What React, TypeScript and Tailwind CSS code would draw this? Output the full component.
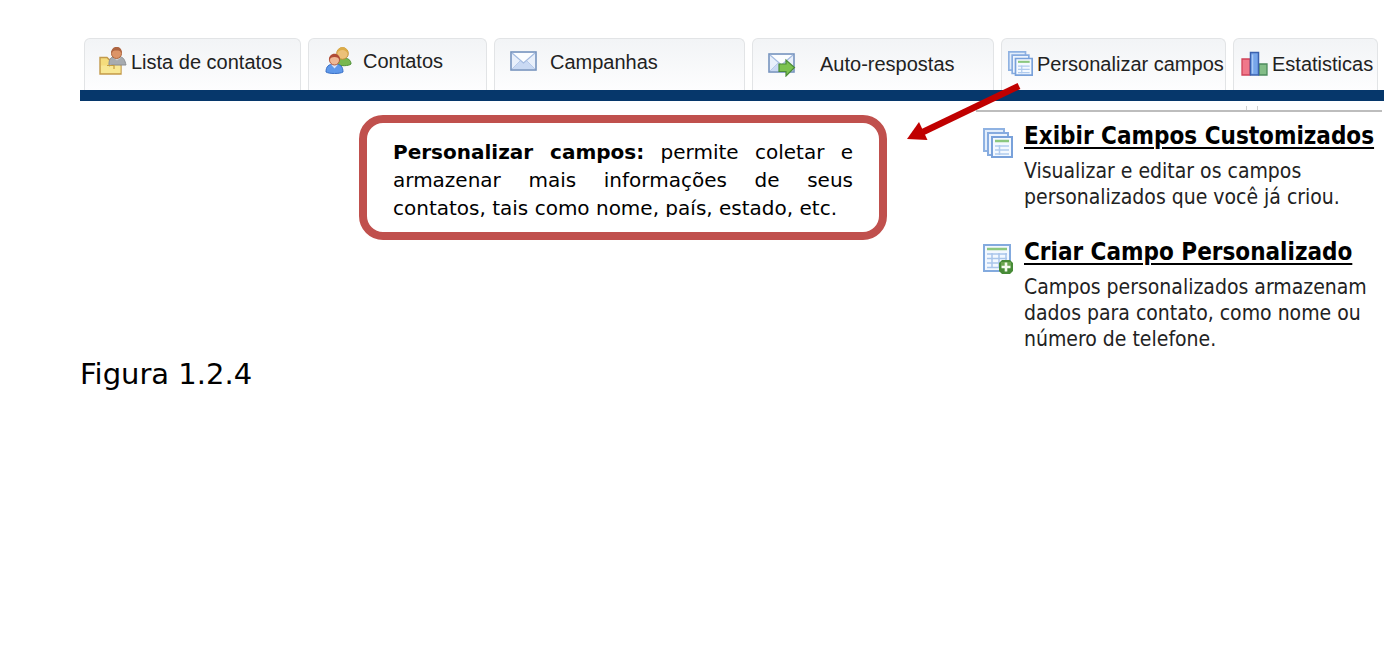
import React from "react";

function ListIcon() {
  return (
    <svg width="28" height="30" viewBox="0 0 28 30" className="shrink-0" aria-hidden="true">
      <path d="M1 10.500h7l2 2h12V27H1z" fill="#f5dc7c" stroke="#c39a4c" strokeWidth="1.400" />
      <path d="M2 18.500h19.500V26H2z" fill="#f8e794" />
      <path d="M10 17c0-5 2-7 5-7h6c4 0 5 4 6 8H13l-3 1z" fill="#a7abb0" stroke="#8a8d92" strokeWidth="1" />
      <path d="M14 10.500l4 3 4-3" fill="#d0d2d5" />
      <circle cx="17.500" cy="6.500" r="5" fill="#dc9468" stroke="#b0673e" strokeWidth="1" />
      <path d="M12 6.500c0-9 11.500-9 11 0-1-2.500-3-3-5.500-3s-4.500.5-5.500 3z" fill="#ad6440" />
      <path d="M8 18.500h7v3.500" fill="none" stroke="#c59c3f" strokeWidth="1.200" />
    </svg>
  );
}

function PeopleIcon() {
  return (
    <svg width="28" height="30" viewBox="0 0 28 30" className="shrink-0" aria-hidden="true">
      <path d="M11 18c0-4 2-6 7-6s8 2 8 6c-2 2-11 2.500-15 0z" fill="#78b850" stroke="#4f9038" strokeWidth="1" />
      <circle cx="17.500" cy="7.500" r="5.800" fill="#ecc078" stroke="#c38e35" strokeWidth="1" />
      <path d="M12 8c-1-9 12-9 11 0-2-3-3-4-5.500-4S13 5 12 8z" fill="#dcac48" />
      <path d="M1 26c0-5 2-8 8.500-8s8.500 3 8.500 8c-3 2-14 2-17 0z" fill="#5e98ea" stroke="#3a70c6" strokeWidth="1" />
      <path d="M6 18.500l3.500 4 3.500-4z" fill="#d5e5fb" />
      <circle cx="9.500" cy="14" r="5" fill="#eeb895" stroke="#b55b3e" strokeWidth="1" />
      <path d="M4 14.500c-1-9 12-9 11 0-1-3-3-3.500-5.500-3.500S5 11.500 4 14.500z" fill="#b04c36" />
    </svg>
  );
}

function MailIcon({ forward = false }: { forward?: boolean }) {
  return (
    <svg width="28" height="26" viewBox="0 0 28 26" className="shrink-0" aria-hidden="true">
      <rect x="1" y="3" width="25" height="18" fill="#e9f0fb" stroke="#7794bf" strokeWidth="1.600" />
      <path d="M2 20l8.500-8.500L13.500 14l3-2.500L25 20z" fill="#c9d9f3" />
      <path d="M2 4l11.500 10L25 4" fill="#fbfdff" stroke="#a4bbe0" strokeWidth="1.200" />
      <path d="M2 20l8-8M25 20l-8-8" fill="none" stroke="#b7cae9" strokeWidth="1" />
      {forward && (
        <path d="M11 13h7V9l8.500 7.500-8.500 8.500v-4.500h-7z" fill="#7cc250" stroke="#4b8b38" strokeWidth="1.200" />
      )}
    </svg>
  );
}

function StackIcon({ size = 30 }: { size?: number }) {
  return (
    <svg width={size} height={size} viewBox="0 0 30 30" className="shrink-0" aria-hidden="true">
      <path d="M1 1h20v22H1z" fill="#e3eefb" stroke="#8fb2e2" strokeWidth="2" />
      <path d="M5 5h20v22H5z" fill="#edf4fd" stroke="#86abdf" strokeWidth="2" />
      <path d="M9 9h20v20H9z" fill="#f4f9ff" stroke="#79a1da" strokeWidth="2" />
      <path d="M12 13h14" stroke="#8bc77f" strokeWidth="2.500" />
      <path d="M12 18h14M12 22h14M12 26h14M16.500 17v10" stroke="#b0cbee" strokeWidth="1.500" />
    </svg>
  );
}

function FormAddIcon() {
  return (
    <svg width="30" height="30" viewBox="0 0 30 30" className="shrink-0" aria-hidden="true">
      <path d="M1 1h26v26H1z" fill="#f3f8ff" stroke="#83aade" strokeWidth="2" />
      <path d="M4 5h20" stroke="#8cc77f" strokeWidth="2.500" />
      <path d="M4 10h20M4 14.500h20M4 19h20M4 23.500h20M9 9v15M16 9v15M23 9v12" stroke="#a9c5eb" strokeWidth="1.500" />
      <path d="M19 16h8l3 3v8l-3 3h-8l-3-3v-8z" fill="#478b37" />
      <path d="M18 18h10v4H18z" fill="#6aa54f" />
      <path d="M23 18.500v9M18.500 23h9" stroke="#f4faef" strokeWidth="2.600" />
    </svg>
  );
}

function ChartIcon() {
  return (
    <svg width="27" height="26" viewBox="0 0 27 26" className="shrink-0" aria-hidden="true">
      <path d="M1 8h8v16H1z" fill="#f0788a" stroke="#cf4258" strokeWidth="1.300" />
      <path d="M18 13h8v11h-8z" fill="#83bd87" stroke="#4d8b5d" strokeWidth="1.300" />
      <path d="M9.500 1.500h8V24h-8z" fill="#78a6ea" stroke="#3b61ae" strokeWidth="1.500" />
      <path d="M11.500 3.500v19" stroke="#a9caf7" strokeWidth="1.500" />
    </svg>
  );
}

const tabs = [
  { label: "Lista de contatos", icon: <ListIcon />, box: "pl-3.5 gap-1 pb-1.5" },
  { label: "Contatos", icon: <PeopleIcon />, box: "pl-4 gap-2.5 pb-2" },
  { label: "Campanhas", icon: <MailIcon />, box: "pl-[15px] gap-3 pb-1.5" },
  { label: "Auto-respostas", icon: <MailIcon forward />, box: "pl-[15px] gap-6 pb-0.5" },
  { label: "Personalizar campos", icon: <StackIcon size={25} />, box: "pl-1.5 gap-1 pb-0.5" },
  { label: "Estatisticas", icon: <ChartIcon />, box: "pl-[7px] gap-1 pb-0.5" },
];

const options = [
  {
    title: "Exibir Campos Customizados",
    text: "Visualizar e editar os campos personalizados que você já criou.",
    icon: <StackIcon />,
  },
  {
    title: "Criar Campo Personalizado",
    text: "Campos personalizados armazenam dados para contato, como nome ou número de telefone.",
    icon: <FormAddIcon />,
  },
];

export default function App() {
  return (
    <div className="min-h-screen bg-white pt-[38px] pr-4 pl-20 font-['DejaVu_Sans',sans-serif] text-black">
      <nav className="grid grid-cols-[217fr_179fr_251fr_242fr_225fr_145fr] gap-[7px] border-b-[11px] border-[#06376b] pr-1.5 pl-1 font-['Liberation_Sans',sans-serif]">
        {tabs.map((tab) => (
          <a
            key={tab.label}
            href="#"
            className={`flex h-[52px] min-w-0 items-center rounded-t-md border border-b-0 border-[#e2e4e6] bg-linear-to-b from-[#f2f4f6] to-[#fdfdfe] text-[20px] whitespace-nowrap text-[#222] ${tab.box}`}
          >
            {tab.icon}
            <span>{tab.label}</span>
          </a>
        ))}
      </nav>

      <main className="flex justify-between">
        <div>
          <section className="relative mt-3.5 ml-[279px] w-[528px] rounded-[24px] border-8 border-[#c0504d] px-[26px] py-[15px]">
            <p className="h-[79px] overflow-hidden text-justify text-[20px] leading-7">
              <strong>Personalizar campos:</strong> permite coletar e armazenar mais informações de seus
              contatos, tais como nome, país, estado, etc.
            </p>
            <svg
              width="116"
              height="60"
              viewBox="0 0 116 60"
              className="absolute -top-10 left-full ml-7 overflow-visible"
              aria-hidden="true"
            >
              <path d="M112 3L16 49" stroke="#c00000" strokeWidth="6.500" />
              <path d="M0 56l12-17 8.500 18z" fill="#c00000" />
            </svg>
          </section>
          <p className="mt-[114px] text-[29px] leading-10">Figura 1.2.4</p>
        </div>

        <aside className="mr-0.5 w-[406px] shrink-0 pt-[5px]">
          <div className="flex h-1 justify-end gap-2.5 pr-[124px]">
            <span className="w-px bg-[#d0d0d0]" />
            <span className="w-px bg-[#d0d0d0]" />
          </div>
          <div className="flex flex-col gap-[26px] border-t-2 border-[#bdbdbd] pt-2 pl-[7px]">
            {options.map((option) => (
              <article key={option.title} className="flex gap-[11px]">
                <div className="pt-2">{option.icon}</div>
                <div>
                  <h2 className="mb-1.5 font-['DejaVu_Sans_Condensed','DejaVu_Sans',sans-serif] text-[24px] leading-8 font-bold whitespace-nowrap">
                    <a href="#" className="underline decoration-2 underline-offset-3">
                      {option.title}
                    </a>
                  </h2>
                  <p className="font-['DejaVu_Sans_Condensed','DejaVu_Sans',sans-serif] text-[21px] leading-[26px] text-[#222]">
                    {option.text}
                  </p>
                </div>
              </article>
            ))}
          </div>
        </aside>
      </main>
    </div>
  );
}
